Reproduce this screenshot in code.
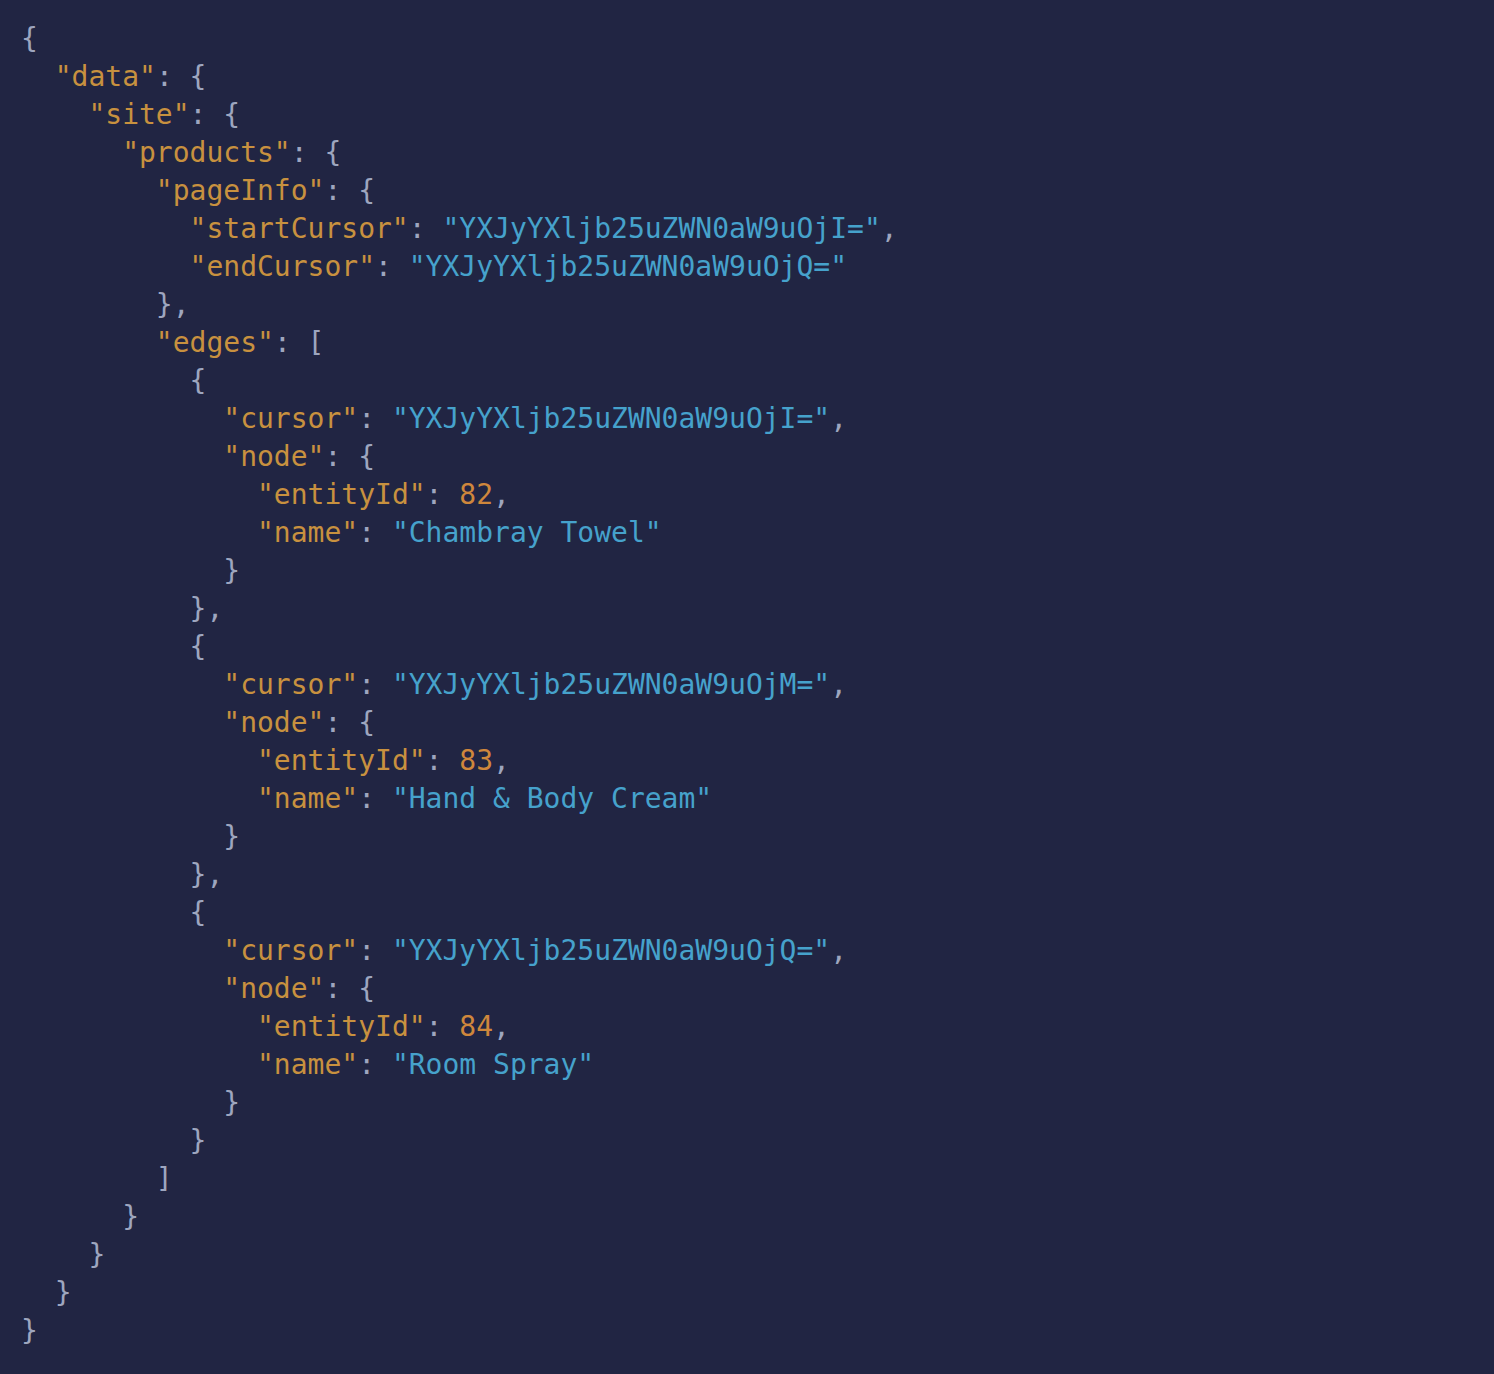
import React from 'react';

type Tok = { t: string; k: 'p' | 'key' | 'str' | 'num' };

const p = (t: string): Tok => ({ t, k: 'p' });
const key = (t: string): Tok => ({ t: `"${t}"`, k: 'key' });
const str = (t: string): Tok => ({ t: `"${t}"`, k: 'str' });
const num = (t: string): Tok => ({ t, k: 'num' });

const edges = [
  { cursor: 'YXJyYXljb25uZWN0aW9uOjI=', id: '82', name: 'Chambray Towel' },
  { cursor: 'YXJyYXljb25uZWN0aW9uOjM=', id: '83', name: 'Hand & Body Cream' },
  { cursor: 'YXJyYXljb25uZWN0aW9uOjQ=', id: '84', name: 'Room Spray' },
];

const lines: [number, Tok[]][] = [
  [0, [p('{')]],
  [1, [key('data'), p(': {')]],
  [2, [key('site'), p(': {')]],
  [3, [key('products'), p(': {')]],
  [4, [key('pageInfo'), p(': {')]],
  [5, [key('startCursor'), p(': '), str('YXJyYXljb25uZWN0aW9uOjI='), p(',')]],
  [5, [key('endCursor'), p(': '), str('YXJyYXljb25uZWN0aW9uOjQ=')]],
  [4, [p('},')]],
  [4, [key('edges'), p(': [')]],
  ...edges.flatMap((e, i): [number, Tok[]][] => [
    [5, [p('{')]],
    [6, [key('cursor'), p(': '), str(e.cursor), p(',')]],
    [6, [key('node'), p(': {')]],
    [7, [key('entityId'), p(': '), num(e.id), p(',')]],
    [7, [key('name'), p(': '), str(e.name)]],
    [6, [p('}')]],
    [5, [p(i < edges.length - 1 ? '},' : '}')]],
  ]),
  [4, [p(']')]],
  [3, [p('}')]],
  [2, [p('}')]],
  [1, [p('}')]],
  [0, [p('}')]],
];

const color = {
  p: 'text-[#9ea6bf]',
  key: 'text-[#c8913f]',
  str: 'text-[#46a2cc]',
  num: 'text-[#cf873c]',
};

export default function App() {
  return (
    <div className="min-h-screen w-full bg-[#212543] pt-[20px] pl-[21px]">
      <pre className="font-['DejaVu_Sans_Mono',monospace] text-[28px] leading-[38px] whitespace-pre">
        {lines.map(([indent, toks], i) => (
          <div key={i}>
            {'  '.repeat(indent)}
            {toks.map((tk, j) => (
              <span key={j} className={color[tk.k]}>
                {tk.t}
              </span>
            ))}
          </div>
        ))}
      </pre>
    </div>
  );
}
